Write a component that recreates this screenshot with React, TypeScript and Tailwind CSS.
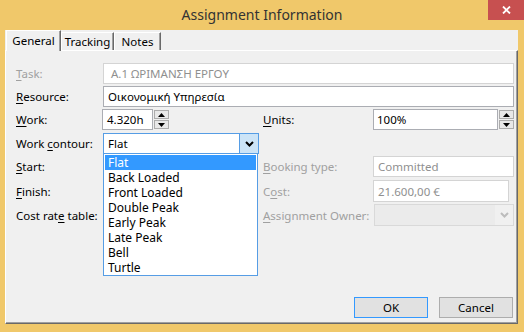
import React from "react";

const font = { fontFamily: '"Noto Sans", "Liberation Sans", sans-serif' };

function L({ u, rest, pre = "", disabled }: { u: string; rest: string; pre?: string; disabled?: boolean }) {
  return (
    <span className={`whitespace-nowrap ${disabled ? "text-[#a0a0a0]" : "text-black"}`}>
      {pre}
      <span className="underline underline-offset-[2px]">{u}</span>
      {rest}
    </span>
  );
}

function Spinner() {
  return (
    <div className="ml-[1px] flex w-[15px] flex-col gap-[1px] self-center">
      <div className="flex h-[9px] items-center justify-center border border-[#acacac] bg-[#e8e8e8]">
        <svg width="7" height="4" viewBox="0 0 7 4"><path d="M3.5 0L7 4H0z" fill="#000" /></svg>
      </div>
      <div className="flex h-[9px] items-center justify-center border border-[#acacac] bg-[#e8e8e8]">
        <svg width="7" height="4" viewBox="0 0 7 4"><path d="M0 0H7L3.5 4z" fill="#000" /></svg>
      </div>
    </div>
  );
}

function Chevron({ color }: { color: string }) {
  return (
    <svg width="9" height="6" viewBox="0 0 9 6">
      <path d="M1 1L4.5 4.5L8 1" fill="none" stroke={color} strokeWidth="2" />
    </svg>
  );
}

const contours = ["Flat", "Back Loaded", "Front Loaded", "Double Peak", "Early Peak", "Late Peak", "Bell", "Turtle"];

export default function App() {
  return (
    <div className="relative flex h-[332px] w-[524px] flex-col bg-[#f0c86a] text-[11.5px] leading-[15px]" style={font}>
      {/* Title bar */}
      <div className="flex h-[30px] items-center justify-center pb-[1px] text-[14px] leading-[18px] text-[#333333]">Assignment Information</div>
      <div className="absolute right-0 top-0 flex h-[20px] w-[36px] items-center justify-center bg-[#c75050]">
        <svg width="9" height="8" viewBox="0 0 9 8">
          <path d="M1 0.5L8 7.5M8 0.5L1 7.5" stroke="#fff" strokeWidth="1.8" />
        </svg>
      </div>

      {/* Client area */}
      <div className="mb-[8px] ml-[5px] mr-[6px] flex flex-1 flex-col bg-[#f0f0f0]">
        {/* Tabs */}
        <div className="relative z-10 flex h-[20px] items-end pl-[1px]">
          <div className="-mb-[1px] flex h-[21px] w-[55px] items-center justify-center border-l border-t border-r border-white border-r-[#696969] bg-[#f0f0f0] pb-[2px] shadow-[inset_-1px_0_0_#a0a0a0]">
            General
          </div>
          <div className="flex h-[18px] w-[53px] items-center justify-center border-l border-t border-r border-white border-r-[#696969] shadow-[inset_-1px_0_0_#a0a0a0]">
            Tracking
          </div>
          <div className="flex h-[18px] w-[47px] items-center justify-center border-l border-t border-r border-white border-r-[#696969] shadow-[inset_-1px_0_0_#a0a0a0]">
            Notes
          </div>
        </div>

        {/* Tab page */}
        <div className="flex flex-1 flex-col border border-white border-r-[#696969] border-b-[#696969] pl-[10px] pr-[3px] pt-[12px] shadow-[inset_-1px_-1px_0_#a0a0a0]">
          {/* Task */}
          <div className="flex h-[21px] items-center">
            <div className="w-[87px]"><L u="T" rest="ask:" disabled /></div>
            <div className="flex h-full flex-1 items-center border border-[#d4d4d4] bg-white pl-[7px] text-[#8f8f8f]">Α.1 ΩΡΙΜΑΝΣΗ ΕΡΓΟΥ</div>
          </div>
          {/* Resource */}
          <div className="mt-[2px] flex h-[21px] items-center">
            <div className="w-[87px]"><L u="R" rest="esource:" /></div>
            <div className="flex h-full flex-1 items-center border border-[#abadb3] bg-white pl-[4px] text-black">Οικονομική Υπηρεσία</div>
          </div>
          {/* Work / Units */}
          <div className="mt-[2px] flex h-[21px] items-center">
            <div className="w-[86px]"><L u="W" rest="ork:" /></div>
            <div className="flex h-full w-[161px]">
              <div className="flex h-full w-[51px] items-center border border-[#abadb3] bg-white pl-[4px]">4.320h</div>
              <Spinner />
            </div>
            <div className="w-[110px]"><L u="U" rest="nits:" /></div>
            <div className="flex h-full flex-1">
              <div className="flex h-full flex-1 items-center border border-[#abadb3] bg-white pl-[3px]">100%</div>
              <Spinner />
            </div>
          </div>
          {/* Work contour */}
          <div className="mt-[3px] flex h-[21px] items-center">
            <div className="w-[87px]"><L pre="Work " u="c" rest="ontour:" /></div>
            <div className="relative z-10 flex h-full w-[156px] border border-[#569de5] bg-white">
              <div className="flex flex-1 items-center pl-[4px]">Flat</div>
              <div className="flex w-[19px] items-center justify-center border-l border-[#569de5] bg-[#cce4f7] pt-[1px]">
                <Chevron color="#000" />
              </div>
              <div className="absolute left-[-1px] top-[19px] w-[155px] border border-[#569de5] bg-white pt-[1px]">
                {contours.map((c, i) => (
                  <div
                    key={c}
                    className={`mx-[1px] flex h-[15px] items-center overflow-hidden pl-[3px] text-[12px] leading-[14px] ${i === 0 ? "bg-[#3399ff] text-white" : "text-black"}`}
                  >
                    {c}
                  </div>
                ))}
              </div>
            </div>
          </div>
          {/* Start / Booking type */}
          <div className="mt-[2px] flex h-[21px] items-center">
            <div className="w-[87px]"><L u="S" rest="tart:" /></div>
            <div className="w-[160px]" />
            <div className="w-[110px]"><L u="B" rest="ooking type:" disabled /></div>
            <div className="flex h-full flex-1 items-center border border-[#d4d4d4] bg-white pl-[4px] text-[#8f8f8f]">Committed</div>
          </div>
          {/* Finish / Cost */}
          <div className="mt-[3px] flex h-[22px] items-center">
            <div className="w-[87px]"><L u="F" rest="inish:" /></div>
            <div className="w-[160px]" />
            <div className="w-[110px]"><L pre="C" u="o" rest="st:" disabled /></div>
            <div className="mr-[5px] flex h-full flex-1 items-center border border-[#d4d4d4] bg-white pl-[4px] text-[#8f8f8f]">21.600,00 €</div>
          </div>
          {/* Cost rate table / Assignment Owner */}
          <div className="mt-[2px] flex h-[22px] items-center">
            <div className="w-[87px]"><L pre="Cost rat" u="e" rest=" table:" /></div>
            <div className="w-[160px]" />
            <div className="w-[111px]"><L u="A" rest="ssignment Owner:" disabled /></div>
            <div className="flex h-full flex-1 border border-[#d9d9d9] bg-[#ebebeb]">
              <div className="flex-1" />
              <div className="flex w-[18px] items-center justify-center bg-[#f0f0f0]">
                <Chevron color="#bcbcbc" />
              </div>
            </div>
          </div>

          <div className="flex-1" />
          {/* Buttons */}
          <div className="mb-[5px] flex justify-end gap-[11px] pr-[1px]">
            <div className="flex h-[21px] w-[74px] items-center justify-center border border-[#3399ff] bg-[#e1e1e1]">OK</div>
            <div className="flex h-[21px] w-[74px] items-center justify-center border border-[#adadad] bg-[#e1e1e1]">Cancel</div>
          </div>
        </div>
      </div>
    </div>
  );
}
